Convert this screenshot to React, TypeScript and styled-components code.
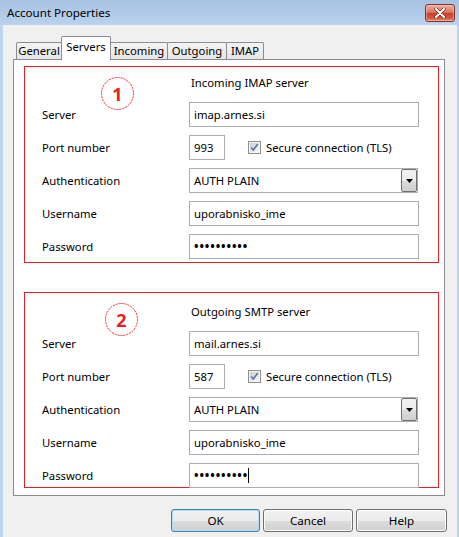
import React from "react";
import styled, { createGlobalStyle } from "styled-components";

const GlobalStyle = createGlobalStyle`
  html, body { margin: 0; padding: 0; }
  body {
    font-family: "Noto Sans", "Open Sans", sans-serif;
    font-size: 11.3px;
    color: #000;
  }
  * { box-sizing: border-box; }
`;

const Window = styled.div`
  width: 459px;
  height: 537px;
  background: #bcd4ed;
  display: flex;
  flex-direction: column;
  overflow: hidden;
`;

const TitleBar = styled.div`
  height: 25px;
  flex: none;
  display: flex;
  justify-content: space-between;
  padding: 0 4px 0 7px;
  background: linear-gradient(#a7c2e2, #bad2ec);
`;

const Title = styled.div`
  font-size: 11.6px;
  line-height: 25px;
  color: #000;
`;

const CloseButton = styled.div`
  margin-top: 4px;
  width: 30px;
  height: 18px;
  border: 1px solid #7b3329;
  border-radius: 3px;
  background: linear-gradient(#ecaa9d 0%, #db7a68 45%, #c8412c 52%, #d0553f 80%, #e28f6e 100%);
  display: flex;
  align-items: center;
  justify-content: center;
  box-shadow: inset 0 0 0 1px rgba(255, 255, 255, 0.35);
`;

const Client = styled.div`
  flex: 1;
  margin: 0 2px 0 3px;
  background: #f0f0f0;
  padding: 11px 0 0 10px;
  display: flex;
  flex-direction: column;
`;

const TabRow = styled.div`
  display: flex;
  align-items: flex-end;
  height: 24px;
  padding-left: 3px;
  margin-bottom: -1px;
  position: relative;
  z-index: 1;
`;

const Tab = styled.div<{ $active?: boolean; $w: number }>`
  width: ${(p) => p.$w}px;
  height: ${(p) => (p.$active ? 24 : 17)}px;
  margin-bottom: ${(p) => (p.$active ? 0 : 1)}px;
  margin-left: -1px;
  &:first-child { margin-left: 0; }
  border: 1px solid #898c95;
  border-bottom: none;
  border-radius: 2px 2px 0 0;
  background: ${(p) => (p.$active ? "#fff" : "linear-gradient(#f3f3f3, #e6e6e6)")};
  display: flex;
  justify-content: center;
  align-items: ${(p) => (p.$active ? "flex-start" : "center")};
  padding-top: ${(p) => (p.$active ? 2 : 0)}px;
  line-height: 16px;
`;

const Panel = styled.div`
  width: 432px;
  height: 437px;
  border: 1px solid #898c95;
  background: #fff;
  padding: 6px 0 0 10px;
  display: flex;
  flex-direction: column;
  gap: 29px;
`;

const Section = styled.div<{ $h: number; $pt: number }>`
  position: relative;
  width: 415px;
  height: ${(p) => p.$h}px;
  border: 1px solid #ed1c24;
  padding: ${(p) => p.$pt}px 0 0 17px;
  display: grid;
  grid-template-columns: 147px 230px;
  grid-auto-rows: min-content;
  row-gap: 8px;
`;

const Heading = styled.div`
  grid-column: 2;
  line-height: 16px;
  padding-left: 2px;
  margin-bottom: 3px;
`;

const Label = styled.div`
  align-self: center;
  line-height: 16px;
`;

const Field = styled.div<{ $w?: number }>`
  width: ${(p) => p.$w ?? 230}px;
  height: 25px;
  border: 1px solid #abadb3;
  background: #fff;
  padding: 0 4px;
  display: flex;
  align-items: center;
  line-height: 16px;
  white-space: nowrap;
`;

const Dots = styled.span`
  font-size: 12px;
  letter-spacing: 0.9px;
  font-weight: 700;
`;

const Caret = styled.span`
  display: inline-block;
  width: 1px;
  height: 15px;
  background: #000;
  margin-left: 0;
`;

const Inline = styled.div`
  display: flex;
  align-items: center;
`;

const CheckLabel = styled.div`
  display: flex;
  align-items: center;
  gap: 5px;
  margin-left: 23px;
  line-height: 16px;
`;

const Select = styled.div`
  width: 229px;
  height: 25px;
  border: 1px solid #abadb3;
  background: #fff;
  display: flex;
  align-items: stretch;
  padding-left: 4px;
`;

const SelectText = styled.div`
  flex: 1;
  display: flex;
  align-items: center;
`;

const SelectButton = styled.div`
  width: 16px;
  border: 1px solid #707070;
  border-radius: 2px;
  background: linear-gradient(#f2f2f2 0%, #ebebeb 50%, #dddddd 51%, #cfcfcf 100%);
  display: flex;
  align-items: center;
  justify-content: center;
`;

const Badge = styled.div<{ $left: number; $top: number }>`
  position: absolute;
  left: ${(p) => p.$left}px;
  top: ${(p) => p.$top}px;
  width: 33px;
  height: 33px;
  display: flex;
  align-items: center;
  justify-content: center;
  color: #ed1c24;
  font-weight: 700;
  font-size: 18px;
  line-height: 1;
`;

const BadgeRing = styled.svg`
  position: absolute;
  inset: 0;
`;

const ButtonRow = styled.div`
  display: flex;
  justify-content: flex-end;
  gap: 3px;
  margin-top: 13px;
  padding-right: 10px;
`;

const Button = styled.div<{ $w: number; $default?: boolean }>`
  width: ${(p) => p.$w}px;
  height: 23px;
  border: 1px solid ${(p) => (p.$default ? "#3c7fb1" : "#707070")};
  border-radius: 3px;
  background: linear-gradient(#f2f2f2 0%, #ebebeb 50%, #dddddd 51%, #cfcfcf 100%);
  box-shadow: inset 0 0 0 1px ${(p) => (p.$default ? "#b3dcf5" : "#fcfcfc")};
  display: flex;
  align-items: center;
  justify-content: center;
  font-size: 11.6px;
`;

const Checkbox = () => (
  <svg width="13" height="13" viewBox="0 0 13 13">
    <defs>
      <linearGradient id="cbg" x1="0" y1="0" x2="1" y2="1">
        <stop offset="0" stopColor="#cbcfd5" />
        <stop offset="1" stopColor="#f6f6f6" />
      </linearGradient>
    </defs>
    <rect x="0.5" y="0.5" width="12" height="12" fill="#f4f4f4" stroke="#8e8f8f" />
    <rect x="2" y="2" width="9" height="9" fill="url(#cbg)" />
    <path d="M3.2 6.4 L5.3 8.9 L9.8 2.9" fill="none" stroke="#5a6fa2" strokeWidth="1.6" />
  </svg>
);

const Ring = ({ n, left, top }: { n: string; left: number; top: number }) => (
  <Badge $left={left} $top={top}>
    <BadgeRing width="33" height="33" viewBox="0 0 33 33">
      <circle cx="16.5" cy="16.5" r="16" fill="none" stroke="#ed1c24" strokeWidth="1" strokeDasharray="2 1" />
    </BadgeRing>
    {n}
  </Badge>
);

type SectionProps = {
  n: string;
  heading: string;
  server: string;
  port: string;
  h: number;
  pt: number;
  badgeLeft: number;
  caret?: boolean;
};

const ServerSection = ({ n, heading, server, port, h, pt, badgeLeft, caret }: SectionProps) => (
  <Section $h={h} $pt={pt}>
    <Ring n={n} left={badgeLeft} top={10} />
    <Heading>{heading}</Heading>
    <Label>Server</Label>
    <Field>{server}</Field>
    <Label>Port number</Label>
    <Inline>
      <Field $w={36}>{port}</Field>
      <CheckLabel>
        <Checkbox />
        Secure connection (TLS)
      </CheckLabel>
    </Inline>
    <Label>Authentication</Label>
    <Select>
      <SelectText>AUTH PLAIN</SelectText>
      <SelectButton>
        <svg width="7" height="4" viewBox="0 0 7 4">
          <path d="M0 0 H7 L3.5 4 Z" fill="#000" />
        </svg>
      </SelectButton>
    </Select>
    <Label>Username</Label>
    <Field>uporabnisko_ime</Field>
    <Label>Password</Label>
    <Field>
      <Dots>••••••••••</Dots>
      {caret && <Caret />}
    </Field>
  </Section>
);

export default function App() {
  return (
    <>
      <GlobalStyle />
      <Window>
        <TitleBar>
          <Title>Account Properties</Title>
          <CloseButton>
            <svg width="12" height="10" viewBox="0 0 12 10">
              <path d="M2 1 L10 9 M10 1 L2 9" stroke="#6a2a22" strokeWidth="3.4" strokeLinecap="round" />
              <path d="M2 1 L10 9 M10 1 L2 9" stroke="#fff" strokeWidth="2" strokeLinecap="round" />
            </svg>
          </CloseButton>
        </TitleBar>
        <Client>
          <TabRow>
            <Tab $w={46}>General</Tab>
            <Tab $w={50} $active>Servers</Tab>
            <Tab $w={58}>Incoming</Tab>
            <Tab $w={60}>Outgoing</Tab>
            <Tab $w={38}>IMAP</Tab>
          </TabRow>
          <Panel>
            <ServerSection
              n="1"
              heading="Incoming IMAP server"
              server="imap.arnes.si"
              port="993"
              h={197}
              pt={8}
              badgeLeft={76}
            />
            <ServerSection
              n="2"
              heading="Outgoing SMTP server"
              server="mail.arnes.si"
              port="587"
              h={196}
              pt={11}
              badgeLeft={80}
              caret
            />
          </Panel>
          <ButtonRow>
            <Button $w={89} $default>OK</Button>
            <Button $w={90}>Cancel</Button>
            <Button $w={91}>Help</Button>
          </ButtonRow>
        </Client>
      </Window>
    </>
  );
}
